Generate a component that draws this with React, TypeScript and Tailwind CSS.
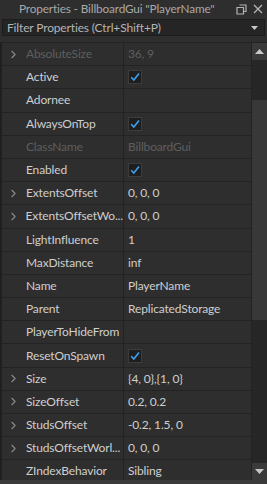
import { ChevronRight } from "lucide-react";

type Row = {
  name: string;
  value?: string;
  check?: boolean;
  expand?: boolean;
  dim?: boolean;
};

const rows: Row[] = [
  { name: "AbsoluteSize", value: "36, 9", expand: true, dim: true },
  { name: "Active", check: true },
  { name: "Adornee" },
  { name: "AlwaysOnTop", check: true },
  { name: "ClassName", value: "BillboardGui", dim: true },
  { name: "Enabled", check: true },
  { name: "ExtentsOffset", value: "0, 0, 0", expand: true },
  { name: "ExtentsOffsetWo...", value: "0, 0, 0", expand: true },
  { name: "LightInfluence", value: "1" },
  { name: "MaxDistance", value: "inf" },
  { name: "Name", value: "PlayerName" },
  { name: "Parent", value: "ReplicatedStorage" },
  { name: "PlayerToHideFrom" },
  { name: "ResetOnSpawn", check: true },
  { name: "Size", value: "{4, 0},{1, 0}", expand: true },
  { name: "SizeOffset", value: "0.2, 0.2", expand: true },
  { name: "StudsOffset", value: "-0.2, 1.5, 0", expand: true },
  { name: "StudsOffsetWorl...", value: "0, 0, 0", expand: true },
  { name: "ZIndexBehavior", value: "Sibling" },
];

const Check = () => (
  <div className="w-[14px] h-[14px] bg-[#1e1e1e] border border-[#3c3c3c] flex items-center justify-center">
    <svg width="12" height="12" viewBox="0 0 12 12">
      <path d="M2.2 6.2 L4.8 9 L10 2.4" fill="none" stroke="#3aa0f0" strokeWidth="1.6" />
    </svg>
  </div>
);

export default function App() {
  return (
    <div
      className="w-[267px] h-[484px] bg-[#2e2e2e] flex flex-col overflow-hidden text-[12px] tracking-[-0.15px]"
      style={{ fontFamily: "Lato, 'Noto Sans', sans-serif" }}
    >
      {/* title */}
      <div className="h-[18px] flex items-center pl-[19px] pr-[4px] text-[#a8a8a8] text-[11.8px]">
        <span className="flex-1 whitespace-nowrap">Properties - BillboardGui "PlayerName"</span>
        <svg width="11" height="11" viewBox="0 0 11 11" className="mr-[6px]">
          <path d="M3.5 1h6.5v6.5H7.5M1 3.5h6.5V10H1z" fill="none" stroke="#b4b4b4" strokeWidth="1.2" />
        </svg>
        <svg width="10" height="10" viewBox="0 0 10 10">
          <path d="M1 1l8 8M9 1l-8 8" stroke="#b4b4b4" strokeWidth="1.3" />
        </svg>
      </div>

      {/* filter */}
      <div className="mx-[2px] mt-[1px] h-[17px] bg-[#252525] border border-[#1c1c1c] flex items-center pl-[4px] pr-[6px] text-[#b4b4b4]">
        <span className="flex-1">Filter Properties (Ctrl+Shift+P)</span>
        <svg width="7" height="4" viewBox="0 0 7 4">
          <path d="M0 0h7L3.5 4z" fill="#c8c8c8" />
        </svg>
      </div>

      {/* table */}
      <div className="mt-[6px] flex flex-1 min-h-0 border-t border-[#232323]">
        <div className="flex-1 flex flex-col border-l-2 border-[#202020]">
          {rows.map((r) => (
            <div key={r.name} className="h-[23.2px] shrink-0 flex border-b border-[#232323]">
              <div className="w-[122px] flex items-center border-r border-[#232323]">
                <div className="w-[22px] flex justify-center pl-[1px]">
                  {r.expand && <ChevronRight size={13} strokeWidth={2} color="#8a8a8a" />}
                </div>
                <span className={`whitespace-nowrap pl-[2px] ${r.dim ? "text-[#5e5e5e]" : "text-[#cfcfcf]"}`}>{r.name}</span>
              </div>
              <div className="flex-1 flex items-center pl-[4px]">
                {r.check ? (
                  <Check />
                ) : (
                  <span className={r.dim ? "text-[#5e5e5e]" : "text-[#cfcfcf]"}>{r.value}</span>
                )}
              </div>
            </div>
          ))}
        </div>

        {/* scrollbar */}
        <div className="w-[16px] flex flex-col bg-[#262626] border-l border-[#232323]">
          <div className="h-[17px] bg-[#3a3a3a] flex items-center justify-center">
            <svg width="9" height="5" viewBox="0 0 9 5">
              <path d="M0 5h9L4.5 0z" fill="#c8c8c8" />
            </svg>
          </div>
          <div className="h-[40px]" />
          <div className="h-[220px] bg-[#383838]" />
          <div className="flex-1" />
          <div className="h-[17px] bg-[#3a3a3a] flex items-center justify-center">
            <svg width="9" height="5" viewBox="0 0 9 5">
              <path d="M0 0h9L4.5 5z" fill="#c8c8c8" />
            </svg>
          </div>
        </div>
      </div>
      <div className="h-[4px] bg-[#3a3a3a] shrink-0" />
    </div>
  );
}
